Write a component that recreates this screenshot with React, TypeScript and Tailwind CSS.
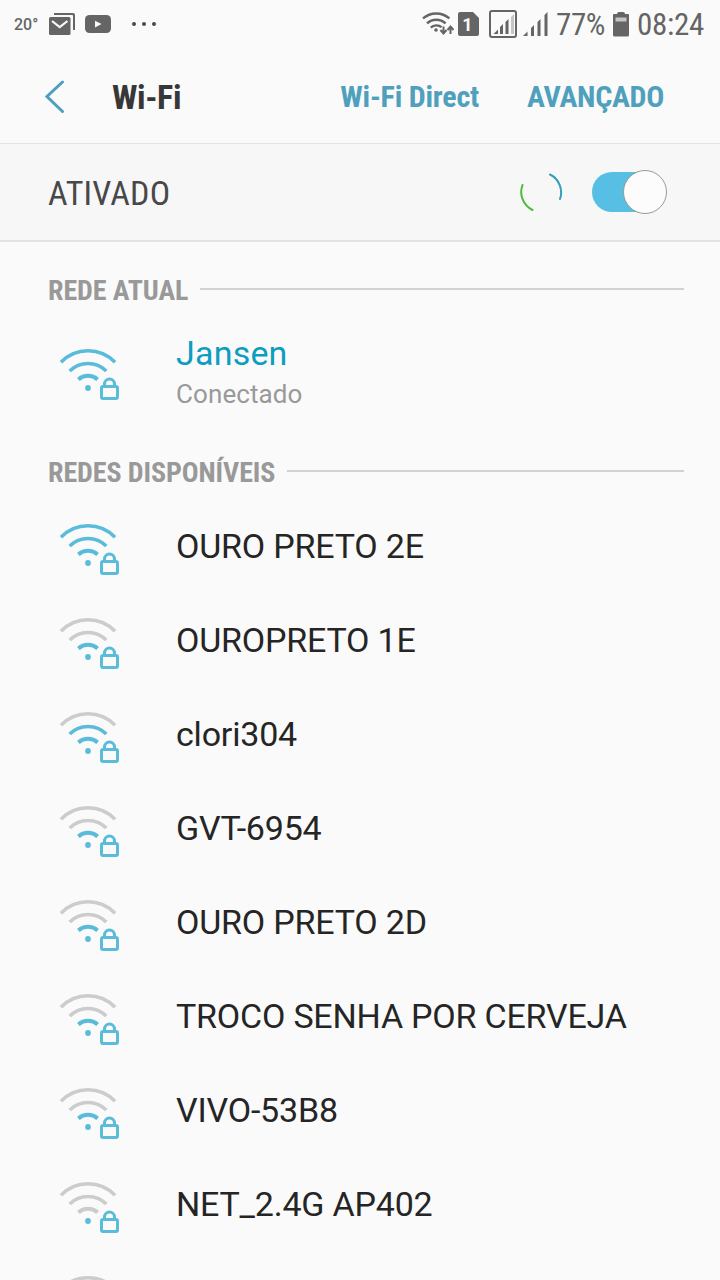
import clsx from "clsx"

interface Network {
  name: string
  level: number
}

const networks: Network[] = [
  { name: "OURO PRETO 2E", level: 3 },
  { name: "OUROPRETO 1E", level: 1 },
  { name: "clori304", level: 2 },
  { name: "GVT-6954", level: 1 },
  { name: "OURO PRETO 2D", level: 1 },
  { name: "TROCO SENHA POR CERVEJA", level: 1 },
  { name: "VIVO-53B8", level: 1 },
  { name: "NET_2.4G AP402", level: 0 },
  { name: "", level: 0 },
]

const condensed = "font-['Roboto_Condensed',Roboto,sans-serif] [font-stretch:75%] whitespace-nowrap"

const WifiIcon = ({ level }: { level: number }) => {
  const color = (n: number) => (level >= n ? "#5bbcda" : "#cccccc")

  return (
    <svg width="64" height="56" viewBox="0 0 64 56" fill="none" strokeWidth="3.6" className="shrink-0">
      <path d="M5 17.2A37.500 37.500 0 0 1 59 17.2" stroke={color(3)} />
      <path d="M13.700 26A26 26 0 0 1 50.300 26" stroke={color(2)} />
      <path d="M22.400 34.400A14.500 14.500 0 0 1 41.600 34.400" stroke={color(1)} strokeWidth="4" />
      <circle cx="32" cy="43" r="2.9" fill="#5bbcda" />
      <g stroke="#5bbcda" strokeWidth="3">
        <rect x="45.5" y="41.5" width="16" height="12" rx="1.5" />
        <path d="M48.5 41.5V39a5 5 0 0 1 10 0V41.500" />
      </g>
    </svg>
  )
}

const SectionTitle = ({ title }: { title: string }) => (
  <div className="flex h-8 items-center gap-3 pl-12 pr-9">
    <h2 className={clsx(condensed, "pt-0.5 text-[28px] leading-8 font-bold tracking-[-0.1px] text-[#999999]")}>{title}</h2>
    <div className="mb-0.5 h-0.5 flex-1 bg-[#d2d2d2]" />
  </div>
)

const StatusBar = () => (
  <div className="flex h-12 items-center justify-between pl-3.5 pr-4 text-[#656565]">
    <div className="flex items-center">
      <span className="w-[35px] pt-0.5 font-[Roboto,sans-serif] text-base font-medium">20°</span>
      <svg width="27" height="24" viewBox="0 0 27 24">
        <path d="M5 1h19q2 0 2 2v15h-2V4q0-1-1-1H5z" fill="#656565" />
        <rect y="5" width="21.5" height="18" rx="1.5" fill="#656565" />
        <path d="M3 9l7.7 6 7.8-6" fill="none" stroke="#fafafa" strokeWidth="2.2" />
      </svg>
      <svg width="26" height="18" viewBox="0 0 26 18" className="ml-[9px]">
        <rect width="26" height="18" rx="4.5" fill="#656565" />
        <path d="M10 5.8v6.6l6.5-3.3z" fill="#fafafa" />
      </svg>
      <svg width="26" height="6" viewBox="0 0 26 6" fill="#4a4a4a" className="ml-[20px]">
        <circle cx="3" cy="3" r="2" />
        <circle cx="13" cy="3" r="2" />
        <circle cx="23" cy="3" r="2" />
      </svg>
    </div>

    <div className="flex items-center">
      <svg width="32" height="26" viewBox="0 0 32 26" fill="none" stroke="#656565" strokeWidth="2.4">
        <path d="M1 7.4A20 20 0 0 1 27.400 7.400M5 12.4A13.500 13.500 0 0 1 23.600 12.400M8.800 16.700A8 8 0 0 1 19.600 16.200" />
        <circle cx="14" cy="19" r="1.8" fill="#656565" stroke="none" />
        <path d="M21.500 15.500v6.500M18.500 19l3 3.500 3-3.500M28.500 23v-6.500M25.500 19l3-3.500 3 3.500" strokeWidth="2" />
      </svg>
      <svg width="21" height="24" viewBox="0 0 21 24" className="ml-1">
        <path d="M2 0h13l6 6v16q0 2-2 2H2q-2 0-2-2V2q0-2 2-2z" fill="#656565" />
        <text x="9.5" y="18.5" textAnchor="middle" fill="#fafafa" className="font-[Roboto,sans-serif] text-[18px] font-bold">1</text>
      </svg>
      <svg width="28" height="28" viewBox="0 0 28 28" className="ml-2.5">
        <rect x="1" y="1" width="26" height="26" rx="2" fill="none" stroke="#656565" strokeWidth="2" />
        <path d="M4.500 24l4.500-4.500V24zM11 17l3-3v10h-3zM16.500 12l3-3v15h-3z" fill="#656565" />
        <path d="M22 7l3-3v20h-3z" fill="#c5c5c5" />
      </svg>
      <svg width="25" height="24" viewBox="0 0 25 24" fill="#656565" className="ml-1.5">
        <path d="M0 24l4.500-4.500V24zM8 16l3-3v11H8zM14.500 10l3-3v17h-3zM21.500 3l3-3v24h-3z" />
      </svg>
      <span className={clsx(condensed, "ml-2 pt-0.5 text-[31px] leading-9 tracking-[-0.4px]")}>77%</span>
      <svg width="16" height="25" viewBox="0 0 16 25" className="mx-2">
        <path d="M4 2q0-2 2-2h4q2 0 2 2h3q1 0 1 1v20q0 1.500-1.500 1.500h-13Q0 24.500 0 23V3q0-1 1-1z" fill="#656565" />
        <path d="M2.500 5.500h11v4h-11z" fill="#c5c5c5" />
      </svg>
      <span className={clsx(condensed, "pt-0.5 text-[31px] leading-9 tracking-[-0.3px]")}>08:24</span>
    </div>
  </div>
)

export default function App() {
  return (
    <div className="h-[1280px] w-[720px] overflow-hidden bg-[#fafafa] font-[Roboto,sans-serif]">
      <StatusBar />

      <header className="flex h-24 items-center border-b border-[#e5e5e5] pl-[45px] pr-14">
        <svg width="20" height="34" viewBox="0 0 20 34" fill="none" stroke="#4fa0bd" strokeWidth="3" strokeLinecap="round">
          <path d="M17.500 3L2 17.500 17.500 32.500" />
        </svg>
        <h1 className={clsx(condensed, "ml-[47px] pt-[3px] text-[34px] font-bold tracking-[-0.4px] text-[#373737]")}>Wi-Fi</h1>
        <span className={clsx(condensed, "ml-auto pt-0.5 text-[30px] font-bold tracking-[-0.2px] text-[#4fa0bd]")}>Wi-Fi Direct</span>
        <span className={clsx(condensed, "ml-12 pt-0.5 text-[30px] font-bold tracking-[-0.3px] text-[#4fa0bd]")}>AVANÇADO</span>
      </header>

      <div className="flex h-[98px] items-center border-b-2 border-[#e2e2e2] bg-[#f7f7f7] pl-12 pr-[53px]">
        <span className={clsx(condensed, "pt-0.5 text-[34px] tracking-[0.2px] text-[#484848]")}>ATIVADO</span>
        <svg width="44" height="40" viewBox="0 0 44 40" fill="none" strokeWidth="2" strokeLinecap="round" className="ml-auto">
          <path d="M31 2.500A20 20 0 0 1 41 27" stroke="#2f9fba" />
          <path d="M3.500 13A20 20 0 0 0 13.500 38" stroke="#4fba39" />
        </svg>
        <div className="ml-[29px] flex h-10 w-[75px] items-center justify-end rounded-full bg-gradient-to-r from-[#57bfe3] from-70% to-transparent to-70%">
          <div className="h-11 w-11 shrink-0 rounded-full border border-[#999999] bg-[#fcfcfc]" />
        </div>
      </div>

      <main className="pt-8">
        <SectionTitle title="REDE ATUAL" />
        <div className="flex h-[150px] items-start pl-14">
          <div className="pt-[39px]">
            <WifiIcon level={3} />
          </div>
          <div className="ml-14 pt-[27px]">
            <p className="text-[34px] leading-10 tracking-[0.2px] text-[#0c9dc0]">Jansen</p>
            <p className="mt-[3px] text-[26px] leading-9 tracking-[0.1px] text-[#999999]">Conectado</p>
          </div>
        </div>

        <SectionTitle title="REDES DISPONÍVEIS" />
        <ul className="pt-3">
          {networks.map((network, i) => (
            <li key={i} className="flex h-[94px] items-center gap-14 pl-14 text-[34px] text-[#252525]">
              <div className="pt-0.5">
                <WifiIcon level={network.level} />
              </div>
              <span className="pb-0.5 tracking-[-0.2px]">{network.name}</span>
            </li>
          ))}
        </ul>
      </main>
    </div>
  )
}
